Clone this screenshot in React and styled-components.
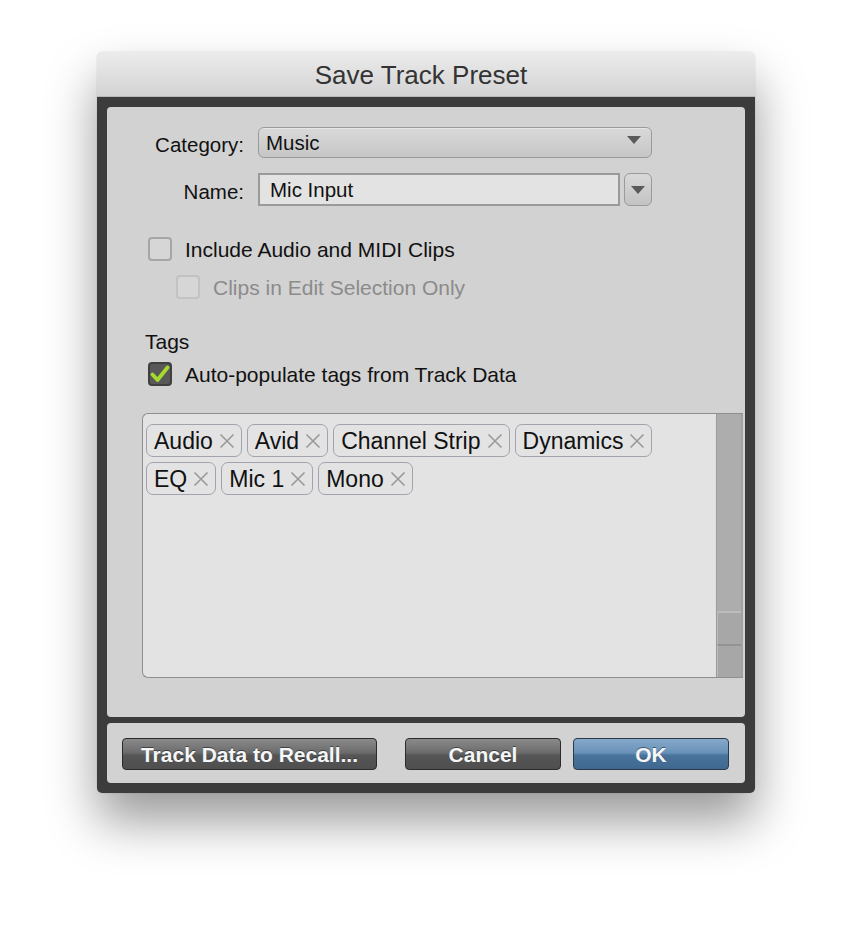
import React from "react";
import styled, { createGlobalStyle } from "styled-components";

const Global = createGlobalStyle`
  html, body { margin: 0; padding: 0; background: #ffffff; }
  body { font-family: "Liberation Sans", Arial, sans-serif; }
  * { box-sizing: border-box; }
`;

const Page = styled.div`
  width: 851px;
  height: 941px;
  padding: 52px 0 0 97px;
  background: #ffffff;
`;

const Window = styled.div`
  width: 658px;
  border-radius: 6px;
  box-shadow: 0 28px 50px rgba(0, 0, 0, 0.4), 0 0 1px rgba(0, 0, 0, 0.35);
`;

const TitleBar = styled.div`
  height: 45px;
  border-radius: 6px 6px 0 0;
  background: linear-gradient(#ececec, #d3d3d3);
  border-bottom: 1px solid #b8b8b8;
  display: flex;
  align-items: center;
  justify-content: center;
  font-family: "Liberation Sans", Arial, sans-serif;
  font-size: 26px;
  color: #333333;
  padding: 2px 10px 0 0;
`;

const Frame = styled.div`
  background: #3c3c3c;
  padding: 10px 10px 10px 10px;
  border-radius: 0 0 5px 5px;
  display: flex;
  flex-direction: column;
  gap: 6px;
`;

const Panel = styled.div`
  background: #d2d2d2;
  border-radius: 4px;
  height: ${(p) => p.$h}px;
`;

const MainPanel = styled(Panel)`
  padding-top: 20px;
  display: flex;
  flex-direction: column;
`;

const FormGrid = styled.div`
  display: grid;
  grid-template-columns: 137px 394px;
  column-gap: 14px;
  row-gap: 15px;
  align-items: center;
`;

const Label = styled.div`
  text-align: right;
  font-size: 20.5px;
  color: #111111;
  padding-top: 4px;
`;

const Select = styled.div`
  height: 31px;
  border: 1.5px solid #9a9a9a;
  border-radius: 6px;
  background: linear-gradient(#d9d9d9, #c6c6c6);
  display: flex;
  align-items: center;
  justify-content: space-between;
  padding: 0 10px 0 7px;
  font-size: 20.5px;
  color: #111111;
  box-shadow: inset 0 1px 0 rgba(255, 255, 255, 0.35);
`;

const SelectText = styled.span`
  padding-top: 1px;
`;

const Arrow = styled.span`
  width: 0;
  height: 0;
  border-left: 7px solid transparent;
  border-right: 7px solid transparent;
  border-top: 8px solid #5a5a5a;
  margin-top: ${(p) => p.$mt || 0}px;
`;

const NameRow = styled.div`
  display: flex;
  gap: 4px;
  height: 33px;
`;

const TextInput = styled.div`
  flex: 1;
  border: 2px solid #9a9a9a;
  background: #e3e3e3;
  display: flex;
  align-items: center;
  padding: 1px 0 0 10px;
  font-size: 20.5px;
  color: #111111;
`;

const DropButton = styled.div`
  width: 28px;
  border: 1.5px solid #9a9a9a;
  border-radius: 6px;
  background: linear-gradient(#d9d9d9, #c3c3c3);
  display: flex;
  align-items: center;
  justify-content: center;
`;

const CheckRow = styled.div`
  display: flex;
  align-items: center;
  gap: 13px;
  height: 24px;
  margin-left: ${(p) => p.$indent}px;
  margin-top: ${(p) => p.$top}px;
  font-size: 21px;
  color: ${(p) => (p.$disabled ? "#8b8b8b" : "#111111")};
`;

const CheckText = styled.span`
  padding-top: 2px;
`;

const Box = styled.span`
  width: 24px;
  height: 24px;
  border-radius: 4px;
  border: 2px solid ${(p) => (p.$checked ? "#3f3f3f" : p.$disabled ? "#c2c2c2" : "#a6a6a6")};
  background: ${(p) => (p.$checked ? "#585858" : "#d6d6d6")};
  display: flex;
  align-items: center;
  justify-content: center;
  flex-shrink: 0;
`;

const SectionLabel = styled.div`
  margin: 31px 0 0 38px;
  font-size: 21px;
  line-height: 24px;
  color: #111111;
`;

const TagBox = styled.div`
  margin: 27px 0 0 35px;
  width: 601px;
  height: 265px;
  border: 1px solid #8f8f8f;
  border-right: none;
  border-radius: 6px 0 0 6px;
  background: #e3e3e3;
  display: flex;
  overflow: hidden;
`;

const TagList = styled.div`
  flex: 1;
  display: flex;
  flex-wrap: wrap;
  align-content: flex-start;
  gap: 5px;
  padding: 10px 0 0 3px;
`;

const Tag = styled.div`
  height: 33px;
  border: 1.5px solid #a3a3ad;
  border-radius: 7px;
  display: flex;
  align-items: center;
  gap: 6px;
  padding: 2px 6px 0 7px;
  font-size: 23px;
  color: #111111;
`;

const ScrollBar = styled.div`
  width: 27px;
  background: #adadad;
  border-left: 1px solid #9c9c9c;
  border-right: 2px solid #a2a2a2;
  display: flex;
  flex-direction: column;
  justify-content: flex-end;
  box-shadow: 1px 0 2px rgba(0, 0, 0, 0.2);
`;

const ScrollBtn = styled.div`
  height: 33px;
  background: #a7a7a7;
  border-top: 2px solid ${(p) => (p.$first ? "#bdbdbd" : "#939393")};
  border-left: 1px solid #bcbcbc;
`;

const ButtonBar = styled(Panel)`
  display: flex;
  align-items: center;
  padding: 1px 16px 0 15px;
`;

const Button = styled.div`
  width: ${(p) => p.$w}px;
  height: 32px;
  margin-left: ${(p) => p.$ml || 0}px;
  border: 1.5px solid ${(p) => (p.$primary ? "#2b3a4a" : "#2b2b2b")};
  border-radius: 4px;
  background: ${(p) =>
    p.$primary
      ? "linear-gradient(#86a9cb, #6a92b9 45%, #4a739c 55%, #3f6891)"
      : "linear-gradient(#8a8a8a, #6c6c6c 45%, #555555 55%, #4f4f4f)"};
  display: flex;
  align-items: center;
  justify-content: center;
  font-size: 21px;
  font-weight: bold;
  color: #f4f6f8;
  text-shadow: 0 -1px 0 rgba(0, 0, 0, 0.45);
  padding-top: 2px;
`;

const Spacer = styled.div`
  flex: 1;
`;

const XIcon = () => (
  <svg width="16" height="16" viewBox="0 0 16 16" style={{ marginTop: -2 }}>
    <path d="M1.5 1.5 L14.5 14.5 M14.5 1.5 L1.5 14.5" stroke="#999999" strokeWidth="1.6" fill="none" />
  </svg>
);

const Check = () => (
  <svg width="20" height="18" viewBox="0 0 20 18">
    <path d="M2.5 9.5 L7.5 15 L17.5 2.5" stroke="#a6d92e" strokeWidth="3.8" fill="none" strokeLinecap="round" strokeLinejoin="round" />
  </svg>
);

const tags = ["Audio", "Avid", "Channel Strip", "Dynamics", "EQ", "Mic 1", "Mono"];

export default function App() {
  return (
    <Page>
      <Global />
      <Window>
        <TitleBar>Save Track Preset</TitleBar>
        <Frame>
          <MainPanel $h={610}>
            <FormGrid>
              <Label>Category:</Label>
              <Select>
                <SelectText>Music</SelectText>
                <Arrow $mt={-6} />
              </Select>
              <Label>Name:</Label>
              <NameRow>
                <TextInput>Mic Input</TextInput>
                <DropButton>
                  <Arrow />
                </DropButton>
              </NameRow>
            </FormGrid>
            <CheckRow $indent={41} $top={31}>
              <Box />
              <CheckText>Include Audio and MIDI Clips</CheckText>
            </CheckRow>
            <CheckRow $indent={69} $top={14} $disabled>
              <Box $disabled />
              <CheckText>Clips in Edit Selection Only</CheckText>
            </CheckRow>
            <SectionLabel>Tags</SectionLabel>
            <CheckRow $indent={41} $top={8}>
              <Box $checked>
                <Check />
              </Box>
              <CheckText>Auto-populate tags from Track Data</CheckText>
            </CheckRow>
            <TagBox>
              <TagList>
                {tags.map((t) => (
                  <Tag key={t}>
                    {t}
                    <XIcon />
                  </Tag>
                ))}
              </TagList>
              <ScrollBar>
                <ScrollBtn $first />
                <ScrollBtn />
              </ScrollBar>
            </TagBox>
          </MainPanel>
          <ButtonBar $h={60}>
            <Button $w={255}>Track Data to Recall...</Button>
            <Spacer />
            <Button $w={156}>Cancel</Button>
            <Button $w={156} $ml={12} $primary>
              OK
            </Button>
          </ButtonBar>
        </Frame>
      </Window>
    </Page>
  );
}
